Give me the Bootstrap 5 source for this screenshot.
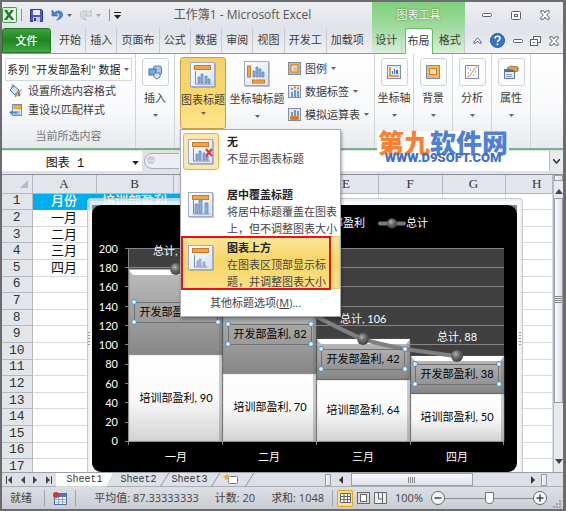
<!DOCTYPE html>
<html lang="zh-CN">
<head>
<meta charset="utf-8">
<meta name="viewport" content="width=device-width, initial-scale=1">
<title>工作簿1 - Microsoft Excel</title>
<link href="https://cdn.jsdelivr.net/npm/bootstrap@5.3.0/dist/css/bootstrap.min.css" rel="stylesheet">
<style>
  body { font: 11px/16px "Open Sans", "Noto Sans CJK SC", sans-serif; color: #3b3b3b; background: #dfe3e8; }
  button, input, select { font: inherit; color: inherit; }
  button { background: none; border: 0; padding: 0; }
  svg { display: block; flex: none; }
  a { color: inherit; text-decoration: none; }
  .xl-window { height: 100vh; min-height: 480px; border: 2px solid #6c6c6e; border-right-width: 3px; }
  .xl-head { background: linear-gradient(#eceef2, #dfe2e8 55%, #eff1f4); border-bottom: 1px solid #5fbf62; }
  .title-row { height: 26px; }
  .tab-row { height: 25px; }
  .title-text { font-size: 12px; color: #555; }
  .vline { width: 1px; height: 12px; background: #8d9096; }
  .ctx-zone { width: 93px; }
  .ctx-title { background: linear-gradient(#7fd07c, #a1dba0); color: #fff; text-shadow: 0 0 2px #3c8c3c, 0 0 1px #3c8c3c; }
  .ctx-tabs { background: linear-gradient(#a1dba0, #d9efd9); }
  .win-zone { width: 98px; }
  .file-tab { width: 49px; background: linear-gradient(#3f9f3c, #1f8424 50%, #43a83e); border: 1px solid #1f7a24; border-radius: 3px 3px 0 0; color: #fff; font-weight: 500; }
  .rb-tab { border-right: 1px solid #c6cad1; white-space: nowrap; line-height: 24px; text-align: center; }
  .rb-tab.is-open { background: #fff; border: 1px solid #5fbf62; border-bottom: 0; border-radius: 3px 3px 0 0; margin: 0 3px -1px; width: 28px; }
  .xl-ribbon { height: 96px; background: linear-gradient(#fff, #f8f9fb 60%, #e7eaee); border-bottom: 2px solid #84ab8e; }
  .rb-group { border-right: 1px solid #cdd8d1; padding: 4px 3px; }
  .cmd-group { padding: 3px 0 0 5px; }
  .sel-group { width: 134px; }
  .sel-box { width: 100%; height: 23px; border: 1px solid #d3d6da; background: #fff; padding: 0 1px; color: #222; appearance: none; border-radius: 0; }
  .sel-wrap { position: relative; }
  .sel-wrap svg { position: absolute; right: 3px; top: 10px; }
  .cmd { height: 19px; gap: 5px; white-space: nowrap; }
  .dim { color: #777; }
  .narrow { width: 39px; }
  .icon-box { width: 27px; height: 28px; border: 1px solid #cfd3d8; border-radius: 3px; background: #fbfcfd; }
  .title-btn { width: 46px; height: 72px; border: 1px solid #c8a24a; border-radius: 3px; background: linear-gradient(#f6d16a, #fbd76b 50%, #fde48f); white-space: nowrap; }
  .axis-btn { width: 54px; height: 72px; white-space: nowrap; }
  .mini-cmd { height: 23px; gap: 4px; white-space: nowrap; }
  .title-menu { top: 72px; left: 0; width: 161px; min-width: 0; padding: 0; border: 1px solid #a7abb0; border-radius: 0; font-size: 11px; line-height: 17px; color: #444; box-shadow: 1px 2px 3px #0005; z-index: 20; }
  .opt { height: 53px; width: 100%; text-align: left; gap: 8px; padding: 2px 1px; border: 1px solid transparent; white-space: nowrap; }
  .opt b { color: #222; display: block; }
  .opt-icon { flex: none; width: 36px; height: 37px; border: 1px solid transparent; border-radius: 3px; }
  .opt-icon.is-set { background: #fbe6b0; border-color: #e0b35c; }
  .opt.is-hot { background: linear-gradient(#fbe69c, #f8d566 45%, #fae187); border-color: #eccf6c; }
  .ring { position: absolute; left: 0; top: 106px; width: 150px; height: 54px; border: 2px solid #f00f0f; pointer-events: none; }
  .more { height: 27px; width: 100%; padding-left: 29px; text-align: left; }
  .logo { position: absolute; left: 375px; top: 129px; width: 132px; height: 33px; z-index: 15; background: #fff; white-space: nowrap; }
  .logo-cn { font: 900 26px/21px "Noto Sans CJK SC", sans-serif; color: #fa8133; }
  .logo-cn span { color: #4f7fd6; }
  .logo-en { font: 900 13px/12px Roboto, sans-serif; color: #4070c8; }
  .xl-formula { height: 21px; background: #dfe3e8; border-top: 1px solid #d5e4d8; }
  .name-box { display: block; width: 140px; height: 20px; border: 0; background: #fff; text-align: center; padding: 2px 14px 0 0; font: 12px/18px "Liberation Mono", "Noto Sans CJK SC", monospace; color: #111; }
  .xl-sheet { border-top: 1px solid #8f949c; margin-top: 3px; background: #fff; }
  .cells { height: calc(100% + 4px); width: 100%; table-layout: fixed; border-collapse: collapse; font: 13px/14px "Liberation Serif", "Noto Sans CJK SC", serif; color: #111; }
  .cells thead th { height: 18px; }
  .cells th, .cells td { padding: 0; border-right: 1px solid #d6d9dd; border-bottom: 1px solid #d6d9dd; text-align: center; overflow: hidden; white-space: nowrap; font-weight: 400; }
  .cells th { background: #e2e5ea; border-color: #b3b7be; color: #333; }
  .cells tbody th { font-family: "Liberation Mono", monospace; }
  .cells td.hd { background: #00aeef; border-color: #00aeef; color: #fff; font-weight: 500; }
  .chart { position: absolute; left: 85px; top: 23px; }
  .vbar { width: 14px; background: #e7eaef; border-left: 1px solid #b4b8c0; }
  .thumb { border: 1px solid #9aa0aa; background: linear-gradient(90deg, #f8f9fb, #dde1e8); }
  .vthumb { height: 69%; }
  .splitter { width: 6px; height: 12px; }
  .hthumb { border: 1px solid #9aa0aa; background: linear-gradient(#f8f9fb, #dde1e8); height: 13px; width: 122px; }
  .xl-tabs { height: 14px; background: #dde1e7; border-top: 1px solid #9ba0a8; }
  .sheet-tab { position: relative; width: 51px; font: 10px/14px "Liberation Mono", monospace; color: #333; text-align: center; }
  .sheet-tab::after { content: ""; position: absolute; right: -1px; top: 0; width: 1px; height: 14px; background: #8d929a; transform: skewX(-32deg); }
  .sheet-tab.is-open { background: #fff; clip-path: polygon(0 0, 100% 0, 88% 100%, 0 100%); width: 57px; }
  .xl-status { height: 23px; background: linear-gradient(#dcdfe4, #c9cdd3); border-top: 1px solid #a9adb4; color: #444; white-space: nowrap; }
  .sep2 { width: 1px; height: 16px; background: #9da2a9; }
  .view-on { background: #fbe08a; border: 1px solid #d9a52b; border-radius: 2px; width: 16px; height: 17px; }
  .zoom-range { width: 88px; height: 14px; appearance: none; background: linear-gradient(#8a8f96, #8a8f96) center / 100% 1px no-repeat; margin: 0; }
  .zoom-range::-webkit-slider-thumb { appearance: none; width: 9px; height: 12px; background: #fff; border: 1px solid #6d7279; border-radius: 1px 1px 5px 5px; }
</style>
<script src="https://cdn.jsdelivr.net/npm/bootstrap@5.3.0/dist/js/bootstrap.bundle.min.js"></script>
</head>
<body>
<svg width="0" height="0" class="position-absolute" aria-hidden="true">
  <defs>
    <linearGradient id="frameG" x1="0" y1="0" x2="1" y2="1"><stop offset="0" stop-color="#fff"/><stop offset="1" stop-color="#d5e1f2"/></linearGradient>
    <symbol id="chartBase" viewBox="0 0 26 26">
      <rect x="1.5" y="1.5" width="24" height="24" fill="#7087ae"/><rect x=".5" y=".5" width="24" height="24" fill="url(#frameG)" stroke="#9badca"/>
    </symbol>
    <symbol id="titleAbove" viewBox="0 0 26 26">
      <use href="#chartBase"/><rect x="4.500" y="3.500" width="16" height="4" fill="#f2a343" stroke="#c87b24"/>
      <path d="M5.500 9v13h16" fill="none" stroke="#7c8daa"/>
      <path d="M8 15h2v6H8zM11 12h2v9h-2zM15 14h2v7h-2zM18 17h2v4h-2z" fill="#8fb1e0" stroke="#5f7fb5" stroke-width=".7"/>
    </symbol>
    <symbol id="titleOver" viewBox="0 0 26 26">
      <use href="#chartBase"/><path d="M5.500 5v17h16" fill="none" stroke="#7c8daa"/>
      <path d="M7 12h3v9H7zM11 8h3v13h-3zM17 11h3v10h-3z" fill="#8fb1e0" stroke="#5f7fb5" stroke-width=".7"/>
      <rect x="4.500" y="3.500" width="16" height="4" fill="#f2a343" stroke="#c87b24"/>
    </symbol>
    <symbol id="titleLow" viewBox="0 0 26 26">
      <use href="#chartBase"/><rect x="4.500" y="3.500" width="16" height="4" fill="#f2a343" stroke="#c87b24"/>
      <path d="M6.500 10v12h13" fill="none" stroke="#7c8daa"/><path d="M9 16h1v5H9zM11 14h2v7h-2zM15 17h2v4h-2z" fill="#a9c1e6" stroke="#7d97c2" stroke-width=".7"/>
    </symbol>
    <symbol id="caret" viewBox="0 0 5 3"><path d="M0 0h5L2.500 3z" fill="#666"/></symbol>
    <symbol id="closeX" viewBox="0 0 10 10"><path d="M.8.800h2.700L5 3 6.500.8h2.700v1.500L6.700 5l2.500 2.700v1.500H6.500L5 7 3.500 9.200H.8V7.700L3.300 5 .8 2.300z" fill="#fff" stroke="#5c6068"/></symbol>
  </defs>
</svg>

<div class="xl-window d-flex flex-column position-relative overflow-hidden">
  <header class="xl-head">
    <div class="title-row d-flex">
      <div class="flex-fill d-flex align-items-center">
        <svg width="15" height="16" viewBox="0 0 15 16" role="img" aria-label="Excel"><rect x=".5" y=".5" width="14" height="15" rx="1" fill="#d9efd6" stroke="#4b9a4b"/><rect x="9" y="2" width="4" height="12" fill="#fff"/><path d="M2 3h3l2 3 2-3h3L8.500 8l4 5h-3L7 10l-2 3H2l3.500-5z" fill="#1d7d2c"/></svg>
        <span class="vline mx-1"></span>
        <button class="ms-1" aria-label="保存"><svg width="13" height="13" viewBox="0 0 13 13"><path d="M.5.500h11l1 1v11H.5z" fill="#5156b8" stroke="#34388d"/><rect x="3" y="1" width="7" height="5" fill="#e9ecfb"/><rect x="3" y="8" width="7" height="5" fill="#bfc6e8"/><path d="M4 9h2v3H4z" fill="#34388d"/></svg></button>
        <button class="ms-2 d-flex align-items-center gap-1" aria-label="撤消"><svg width="12" height="12" viewBox="0 0 12 12"><path d="M1 1v6h6L5 5c2-1.500 3.500-.5 3.500 1.500 0 2-1.500 3-3 4.500C9 10.500 11.500 8.500 11.500 5.500 11.500 2 7.500.500 3.500 3.500z" fill="#4a86d8" stroke="#2a5fae" stroke-width=".6"/></svg><svg width="5" height="3"><use href="#caret"/></svg></button>
        <button class="ms-2 d-flex align-items-center gap-1 opacity-50" aria-label="恢复"><svg width="12" height="12" viewBox="0 0 12 12"><path d="M11 1v6H5l2-2C5 3.500 3.500 4.500 3.500 6.500c0 2 1.500 3 3 4.500C3 10.500.5 8.500.5 5.500.5 2 4.500.500 8.500 3.500z" fill="#d6d9de" stroke="#777c85" stroke-width=".8"/></svg><svg width="5" height="3"><use href="#caret"/></svg></button>
        <span class="vline ms-2 me-1"></span>
        <button aria-label="自定义快速访问工具栏"><svg width="7" height="7" viewBox="0 0 7 7"><path d="M0 .5h7" stroke="#222"/><path d="M0 3h7L3.500 7z" fill="#222"/></svg></button>
        <h1 class="title-text flex-fill text-center m-0 pe-2 fw-normal">工作簿1 - Microsoft Excel</h1>
      </div>
      <div class="ctx-zone ctx-title d-flex align-items-center justify-content-center">图表工具</div>
      <div class="win-zone d-flex align-items-center justify-content-around px-1 ps-2">
        <button aria-label="最小化"><svg width="10" height="4"><rect x=".5" y=".5" width="9" height="3" rx="1" fill="#fff" stroke="#5c6068"/></svg></button>
        <button aria-label="最大化"><svg width="10" height="9"><rect x=".5" y=".5" width="9" height="8" rx="1" fill="#fff" stroke="#5c6068"/><rect x="3.500" y="3.500" width="3" height="2" fill="none" stroke="#5c6068"/></svg></button>
        <button aria-label="关闭"><svg width="10" height="10"><use href="#closeX"/></svg></button>
      </div>
    </div>
    <nav class="tab-row d-flex">
      <button class="file-tab">文件</button>
      <div class="flex-fill d-flex px-1">
        <a href="#" class="rb-tab flex-fill">开始</a><a href="#" class="rb-tab flex-fill">插入</a><a href="#" class="rb-tab flex-fill">页面布</a><a href="#" class="rb-tab flex-fill">公式</a><a href="#" class="rb-tab flex-fill">数据</a><a href="#" class="rb-tab flex-fill">审阅</a><a href="#" class="rb-tab flex-fill">视图</a><a href="#" class="rb-tab flex-fill">开发工</a><a href="#" class="rb-tab flex-fill border-0">加载项</a>
      </div>
      <div class="ctx-zone ctx-tabs d-flex">
        <a href="#" class="rb-tab flex-fill">设计</a><a href="#" class="rb-tab is-open">布局</a><a href="#" class="rb-tab flex-fill">格式</a>
      </div>
      <div class="win-zone d-flex align-items-center justify-content-between ps-2 pe-1">
        <button aria-label="折叠功能区"><svg width="9" height="7" viewBox="0 0 9 7"><path d="M.8 5L4.500.800 8.200 5v1.200H6.500L4.500 4 2.500 6.200H.8z" fill="#fff" stroke="#5c6068"/></svg></button>
        <button aria-label="帮助"><svg width="15" height="15" viewBox="0 0 15 15"><circle cx="7.500" cy="7.500" r="7" fill="#3473c6" stroke="#2558a0"/><path d="M5 5.500C5 2.500 10 2.500 10 5.500 10 7.500 7.500 7 7.500 9.200M7.500 10.500v1.700" fill="none" stroke="#fff" stroke-width="1.600"/></svg></button>
        <button aria-label="最小化窗口"><svg width="10" height="4"><rect x=".5" y=".5" width="9" height="3" rx="1" fill="#fff" stroke="#5c6068"/></svg></button>
        <button aria-label="还原窗口"><svg width="11" height="10"><rect x="3.500" y=".5" width="7" height="6" fill="#fff" stroke="#5c6068"/><rect x=".5" y="3.500" width="7" height="6" fill="#fff" stroke="#5c6068"/><rect x="3" y="6" width="2" height="1" fill="#5c6068"/></svg></button>
        <button aria-label="关闭窗口"><svg width="10" height="10"><use href="#closeX"/></svg></button>
      </div>
    </nav>
  </header>

  <section class="xl-ribbon d-flex">
    <div class="rb-group sel-group d-flex flex-column">
      <div class="sel-wrap"><select class="sel-box" aria-label="图表元素"><option>系列 "开发部盈利" 数据</option></select><svg width="5" height="3"><use href="#caret"/></svg></div>
      <button class="cmd d-flex align-items-center ps-1"><svg width="14" height="14" viewBox="0 0 14 14"><path d="M1 6l4-4 5 4-4 5z" fill="#cfe0f5" stroke="#4f76ac"/><path d="M3 4V1.500C3 .5 5 .5 5 2" fill="none" stroke="#4f76ac"/><path d="M9 7c2 1 3 3 2 5-1 1-2 0-2-2z" fill="#3c78c8"/><path d="M13 5L8 12l-2 1 .5-2z" fill="#eaa93c" stroke="#a8701c" stroke-width=".5"/></svg>设置所选内容格式</button>
      <button class="cmd d-flex align-items-center ps-1"><svg width="14" height="14" viewBox="0 0 14 14"><rect x="3.500" y="1.500" width="9" height="11" fill="#e6effa" stroke="#6f8db9"/><rect x="5" y="2" width="7" height="4" fill="#f3b13f" stroke="#b87c1d" stroke-width=".5"/><path d="M5 9h6M5 11h6" stroke="#6f8db9"/><path d="M0 9.500L4 6.500v2h4v2H4v2z" fill="#4d8be0"/></svg>重设以匹配样式</button>
      <div class="dim text-center mt-auto">当前所选内容</div>
    </div>
    <div class="rb-group narrow">
      <button class="d-flex flex-column align-items-center w-100"><span class="icon-box d-flex align-items-center justify-content-center"><svg width="15" height="15" viewBox="0 0 15 15"><rect x="5.500" y="1" width="8" height="9" rx="2" fill="#a9c8ee" stroke="#557fb8"/><rect x="1" y="4" width="7" height="6" fill="#7aa5dd" stroke="#476fa8"/><path d="M6 8h6v4l-3 2-3-2z" fill="#d5e5f8" stroke="#557fb8"/></svg></span><span class="mt-1">插入</span><svg class="mt-2" width="5" height="3"><use href="#caret"/></svg></button>
    </div>
    <div class="rb-group cmd-group d-flex flex-fill">
      <div class="position-relative">
        <button class="title-btn d-flex flex-column align-items-center pt-1" aria-expanded="true"><svg width="26" height="26"><use href="#titleAbove"/></svg><span class="mt-1">图表标题</span><svg class="mt-1" width="5" height="3"><use href="#caret"/></svg></button>
        <div class="dropdown-menu title-menu show">
          <button class="opt d-flex"><span class="opt-icon d-flex align-items-center justify-content-center is-set"><svg width="26" height="26" viewBox="0 0 26 26"><use href="#titleAbove"/><path d="M18 10l6 7M24 10l-6 7" stroke="#e03426" stroke-width="2"/></svg></span><span><b>无</b>不显示图表标题</span></button>
          <button class="opt d-flex"><span class="opt-icon d-flex align-items-center justify-content-center"><svg width="26" height="26"><use href="#titleOver"/></svg></span><span><b>居中覆盖标题</b>将居中标题覆盖在图表<br>上，但不调整图表大小</span></button>
          <button class="opt d-flex is-hot"><span class="opt-icon d-flex align-items-center justify-content-center"><svg width="26" height="26"><use href="#titleLow"/></svg></span><span><b>图表上方</b>在图表区顶部显示标<br>题，并调整图表大小</span></button>
          <button class="more">其他标题选项(<u>M</u>)...</button>
          <div class="ring"></div>
        </div>
      </div>
      <button class="axis-btn d-flex flex-column align-items-center pt-1 mx-1"><svg width="26" height="26" viewBox="0 0 26 26"><use href="#chartBase"/><rect x="3.500" y="5" width="3" height="11" fill="#f2a343" stroke="#c87b24"/><rect x="8.500" y="19" width="12" height="3" fill="#f2a343" stroke="#c87b24"/><path d="M9 10h2v6H9zM12 6h2v10h-2zM15 8h2v8h-2zM18 11h2v5h-2z" fill="#8fb1e0" stroke="#5f7fb5" stroke-width=".7"/></svg><span class="mt-1">坐标轴标题</span><svg class="mt-2" width="5" height="3"><use href="#caret"/></svg></button>
      <div>
        <button class="mini-cmd d-flex align-items-center"><svg width="13" height="13"><rect x=".5" y=".5" width="12" height="12" fill="#f0b45a" stroke="#7c8daa"/><rect x="3" y="3" width="7" height="7" fill="#dfe8f5" stroke="#b87c2d"/><path d="M5 8h4M5 6h4" stroke="#e0a040"/></svg>图例<svg width="5" height="3"><use href="#caret"/></svg></button>
        <button class="mini-cmd d-flex align-items-center"><svg width="13" height="13"><rect x=".5" y=".5" width="12" height="12" fill="#dfe9f7" stroke="#7c8daa"/><path d="M3 7h2v5H3zM6 5h2v7H6zM9 6h2v6H9z" fill="#6e97d2"/><path d="M3 4h2M6 2.500h2M9 3.500h2" stroke="#e2872a" stroke-width="2"/></svg>数据标签<svg width="5" height="3"><use href="#caret"/></svg></button>
        <button class="mini-cmd d-flex align-items-center"><svg width="13" height="13"><rect x=".5" y=".5" width="12" height="12" fill="#dfe9f7" stroke="#7c8daa"/><path d="M3 4h2v4H3zM6 2h2v6H6zM9 3h2v5H9z" fill="#6e97d2"/><path d="M2 8h9v4H2z" fill="#ec8b34"/><path d="M2 10h9M5 8v4M8 8v4" stroke="#b35f17" stroke-width=".6"/></svg>模拟运算表<svg width="5" height="3"><use href="#caret"/></svg></button>
      </div>
    </div>
    <div class="rb-group narrow">
      <button class="d-flex flex-column align-items-center w-100 text-nowrap"><span class="icon-box d-flex align-items-center justify-content-center"><svg width="14" height="14"><rect x=".5" y=".5" width="13" height="13" fill="#e3ecf8" stroke="#7c8daa"/><path d="M3 2v9h9" fill="none" stroke="#ec7d2b" stroke-width="1.500"/><path d="M5 6h1v3H5zM7 4h1v5H7zM9 5h2v4H9z" fill="#4677be"/></svg></span><span class="mt-1">坐标轴</span><svg class="mt-2" width="5" height="3"><use href="#caret"/></svg></button>
    </div>
    <div class="rb-group narrow">
      <button class="d-flex flex-column align-items-center w-100"><span class="icon-box d-flex align-items-center justify-content-center"><svg width="14" height="14"><rect x=".5" y=".5" width="13" height="13" fill="#f4b765" stroke="#7c8daa"/><rect x="3.500" y="3.500" width="7" height="6" fill="#f9d9a6" stroke="#c38232"/></svg></span><span class="mt-1">背景</span><svg class="mt-2" width="5" height="3"><use href="#caret"/></svg></button>
    </div>
    <div class="rb-group narrow">
      <button class="d-flex flex-column align-items-center w-100"><span class="icon-box d-flex align-items-center justify-content-center"><svg width="14" height="14"><rect x=".5" y=".5" width="13" height="13" fill="#f6f8fc" stroke="#8392ab"/><path d="M2 12C7 11 8 3 12 2" fill="none" stroke="#e9892f"/><path d="M3 8h1M5 5h1M8 10h1M10 7h1M3 3h1" stroke="#4677be"/></svg></span><span class="mt-1">分析</span><svg class="mt-2" width="5" height="3"><use href="#caret"/></svg></button>
    </div>
    <div class="rb-group narrow">
      <button class="d-flex flex-column align-items-center w-100"><span class="icon-box d-flex align-items-center justify-content-center"><svg width="15" height="14"><rect x=".5" y="4.500" width="10" height="9" fill="#e3ecf8" stroke="#5e7cab"/><path d="M1 5h9v2H1z" fill="#3f6fb8"/><path d="M2 9.500h6M2 11.500h6" stroke="#8aa2c8"/><path d="M3 3l4-2 7 1v4l-3 1-2-2H6z" fill="#dba544" stroke="#7a5a1d" stroke-width=".7"/></svg></span><span class="mt-1">属性</span><svg class="mt-2" width="5" height="3"><use href="#caret"/></svg></button>
    </div>
    <div class="px-3"></div>
  </section>

  <div class="logo text-center"><div class="logo-cn">第九<span>软件网</span></div><div class="logo-en">WWW.D9SOFT.COM</div></div>

  <div class="xl-formula d-flex align-items-center">
    <div class="sel-wrap"><input class="name-box" aria-label="名称框" value="图表 1"><svg width="7" height="4" viewBox="0 0 5 3"><path d="M0 0h5L2.500 3z" fill="#222"/></svg></div>
    <svg width="37" height="18" viewBox="0 0 37 18"><path d="M37 1.500H10a7.500 7.500 0 0 0 0 15h27" fill="#eceef1" stroke="#a9adb4"/><circle cx="9" cy="8" r="4" fill="#c9ccd2"/><path d="M6 9h6" stroke="#eee"/></svg>
    <input class="flex-fill border-0 bg-white h-100" aria-label="编辑栏">
    <button class="vbar h-100 d-flex align-items-center justify-content-center" aria-label="展开编辑栏"><svg width="7" height="5"><path d="M0 0l3.500 4L7 0" fill="none" stroke="#333" stroke-width="1.500"/></svg></button>
  </div>

  <main class="xl-sheet d-flex flex-fill position-relative overflow-hidden">
    <div class="flex-fill position-relative overflow-hidden">
      <table class="cells">
        <colgroup><col width="30"><col width="64"><col width="77"><col width="71"><col width="70"><col width="64"><col width="64"><col width="63"><col></colgroup>
        <thead><tr><th class="text-end"><svg class="ms-auto me-1" width="8" height="8"><path d="M8 0v8H0z" fill="#b6bac2"/></svg></th><th>A</th><th>B</th><th>C</th><th>D</th><th>E</th><th>F</th><th>G</th><th class="ps-3">H</th></tr></thead>
        <tbody>
          <tr><th>1</th><td class="hd">月份</td><td class="hd">培训部盈利</td><td class="hd"></td><td class="hd"></td><td></td><td></td><td></td><td></td></tr>
          <tr><th>2</th><td>一月</td><td></td><td></td><td></td><td></td><td></td><td></td><td></td></tr>
          <tr><th>3</th><td>二月</td><td></td><td></td><td></td><td></td><td></td><td></td><td></td></tr>
          <tr><th>4</th><td>三月</td><td></td><td></td><td></td><td></td><td></td><td></td><td></td></tr>
          <tr><th>5</th><td>四月</td><td></td><td></td><td></td><td></td><td></td><td></td><td></td></tr>
          <tr><th>6</th><td></td><td></td><td></td><td></td><td></td><td></td><td></td><td></td></tr>
          <tr><th>7</th><td></td><td></td><td></td><td></td><td></td><td></td><td></td><td></td></tr>
          <tr><th>8</th><td></td><td></td><td></td><td></td><td></td><td></td><td></td><td></td></tr>
          <tr><th>9</th><td></td><td></td><td></td><td></td><td></td><td></td><td></td><td></td></tr>
          <tr><th>10</th><td></td><td></td><td></td><td></td><td></td><td></td><td></td><td></td></tr>
          <tr><th>11</th><td></td><td></td><td></td><td></td><td></td><td></td><td></td><td></td></tr>
          <tr><th>12</th><td></td><td></td><td></td><td></td><td></td><td></td><td></td><td></td></tr>
          <tr><th>13</th><td></td><td></td><td></td><td></td><td></td><td></td><td></td><td></td></tr>
          <tr><th>14</th><td></td><td></td><td></td><td></td><td></td><td></td><td></td><td></td></tr>
          <tr><th>15</th><td></td><td></td><td></td><td></td><td></td><td></td><td></td><td></td></tr>
          <tr><th>16</th><td></td><td></td><td></td><td></td><td></td><td></td><td></td><td></td></tr>
          <tr><th>17</th><td></td><td></td><td></td><td></td><td></td><td></td><td></td><td></td></tr>
        </tbody>
      </table>

      <svg class="chart" width="436" height="275" viewBox="87 198 436 275" font-family="Lato, 'Noto Sans CJK SC', sans-serif" font-size="11" role="img" aria-label="盈利图表">
        <defs>
          <linearGradient id="low" x1="0" y1="0" x2="0" y2="1"><stop offset="0" stop-color="#fff"/><stop offset=".5" stop-color="#fafafa"/><stop offset="1" stop-color="#d2d2d2"/></linearGradient>
          <linearGradient id="up" x1="0" y1="0" x2="0" y2="1"><stop offset="0" stop-color="#bdbdbd"/><stop offset="1" stop-color="#868686"/></linearGradient>
          <radialGradient id="ball" cx=".4" cy=".35" r=".6"><stop offset="0" stop-color="#b5b5b5"/><stop offset=".5" stop-color="#6c6c6c"/><stop offset="1" stop-color="#474747"/></radialGradient>
        </defs>
        <rect x="87.500" y="198.500" width="435" height="280" rx="3" fill="#e8ebed" fill-opacity=".75" stroke="#c3c8cc"/>
        <rect x="90" y="201" width="430" height="276" fill="#fff" fill-opacity=".5"/>
        <path d="M92 205h7l-7 7zM517 205h-7l7 7z" fill="#888"/>
        <rect x="92" y="205" width="425" height="267" rx="9" fill="#000"/>
        <rect x="129" y="248" width="375" height="193" fill="#404040"/>
        <path d="M125 248.500h379M125 267.500h379M125 286.500h379M125 306.500h379M125 325.500h379M125 344.500h379M125 364.500h379M125 383.500h379M125 402.500h379M125 422.500h379M125 441.500h379M128.500 248v197M222.500 441v4M316.500 441v4M410.500 441v4M503.500 441v4" stroke="#868686" fill="none"/>
        <g fill="url(#up)" stroke="#777" stroke-width=".5"><rect x="129" y="269" width="93" height="86"/><rect x="223" y="294" width="93" height="80"/><rect x="317" y="339" width="93" height="40"/><rect x="411" y="356" width="93" height="37"/></g>
        <g fill="#fff"><path d="M129 270h93l-4 5h-85zM317 339h93l-4 5h-85zM411 356h93l-4 5h-85z"/></g>
        <g fill="url(#low)" stroke="#bbb" stroke-width=".5"><rect x="129" y="355" width="93" height="86"/><rect x="223" y="374" width="93" height="67"/><rect x="317" y="380" width="93" height="61"/><rect x="411" y="394" width="93" height="47"/></g>
        <g fill="none" stroke="#6d6d6d" stroke-opacity=".35" stroke-width="3"><path d="M220.500 275v166M314.500 318v123M408.500 344v97M502.500 361v80"/></g>
        <path d="M176 269C207 273 238 283 269 294C300 305 332 327 363 339C394 349 426 352 457 356" fill="none" stroke="#808080" stroke-width="4"/>
        <g fill="url(#ball)"><circle cx="176" cy="269" r="6"/><circle cx="269" cy="294" r="6"/><circle cx="363" cy="339" r="6"/><circle cx="457" cy="356" r="6"/></g>
        <path d="M380 223.500h24" stroke="#777" stroke-width="4" stroke-linecap="round"/><circle cx="392" cy="223.500" r="5" fill="url(#ball)"/>
        <g fill="#fff">
          <text x="365" y="227" text-anchor="end">开发部盈利</text><text x="406" y="227">总计</text>
          <text x="153" y="255">总计, 178</text><text x="340" y="323">总计, 106</text><text x="437" y="341">总计, 88</text>
          <g text-anchor="end"><text x="118" y="253">200</text><text x="118" y="272">180</text><text x="118" y="291">160</text><text x="118" y="311">140</text><text x="118" y="330">120</text><text x="118" y="349">100</text><text x="118" y="368">80</text><text x="118" y="388">60</text><text x="118" y="407">40</text><text x="118" y="426">20</text><text x="118" y="445">0</text></g>
          <g text-anchor="middle"><text x="176" y="461">一月</text><text x="269" y="461">二月</text><text x="363" y="461">三月</text><text x="457" y="461">四月</text></g>
        </g>
        <g fill="none" stroke="#707070"><rect x="134.500" y="302.500" width="83" height="20"/><rect x="228.500" y="324.500" width="83" height="20"/><rect x="321.500" y="349.500" width="83" height="20"/><rect x="415.500" y="364.500" width="83" height="20"/></g>
        <g fill="#000" text-anchor="middle">
          <text x="176" y="316">开发部盈利, 88</text><text x="270" y="338">开发部盈利, 82</text><text x="363" y="363">开发部盈利, 42</text><text x="457" y="378">开发部盈利, 38</text>
          <text x="176" y="402">培训部盈利, 90</text><text x="270" y="411">培训部盈利, 70</text><text x="363" y="414">培训部盈利, 64</text><text x="457" y="421">培训部盈利, 50</text>
        </g>
        <g fill="#d9eefa" stroke="#4f8db5"><circle cx="134" cy="302" r="2.500"/><circle cx="134" cy="322" r="2.500"/><circle cx="218" cy="322" r="2.500"/><circle cx="228" cy="324" r="2.500"/><circle cx="311" cy="324" r="2.500"/><circle cx="228" cy="344" r="2.500"/><circle cx="311" cy="344" r="2.500"/><circle cx="321" cy="349" r="2.500"/><circle cx="405" cy="349" r="2.500"/><circle cx="321" cy="369" r="2.500"/><circle cx="405" cy="369" r="2.500"/><circle cx="415" cy="364" r="2.500"/><circle cx="499" cy="364" r="2.500"/><circle cx="415" cy="384" r="2.500"/><circle cx="499" cy="384" r="2.500"/></g>
        <path d="M89 332v14M520 332v14" stroke="#999" stroke-width="2" stroke-dasharray="1 2"/>
      </svg>
    </div>
    <div class="vbar d-flex flex-column align-items-stretch">
      <div class="thumb mb-2" aria-hidden="true"><div class="pt-1"></div></div>
      <svg class="mx-auto mb-1" width="8" height="5"><path d="M4 0l4 5H0z" fill="#444"/></svg>
      <div class="thumb vthumb d-flex align-items-center justify-content-center"><svg width="7" height="8"><path d="M0 .5h7M0 2.500h7M0 4.500h7M0 6.500h7" stroke="#888"/></svg></div>
      <svg class="mx-auto mt-auto mb-2" width="8" height="5"><path d="M4 5l4-5H0z" fill="#444"/></svg>
    </div>
  </main>

  <div class="xl-tabs d-flex align-items-center">
    <svg class="ms-1 me-1" width="46" height="8" viewBox="0 0 46 8" role="img" aria-label="工作表导航"><path d="M.500 0v8M45.500 0v8" stroke="#444"/><path d="M6 0v8L2 4zM19 0v8l-4-4zM27 0v8l4-4zM40 0v8l4-4z" fill="#444"/></svg>
    <button class="sheet-tab is-open">Sheet1</button><button class="sheet-tab">Sheet2</button><button class="sheet-tab">Sheet3</button>
    <button class="sheet-tab d-flex justify-content-center w-auto px-2" aria-label="插入工作表"><svg width="18" height="13" viewBox="0 0 18 13"><rect x="5.500" y="3.500" width="9" height="7" rx="1" fill="#fff" stroke="#667aa5"/><path d="M4 0l1 2.500L8 3 5.500 5 6 8 4 6 1.500 7.500 2 5 0 3l3-.5z" fill="#f1a93a"/></svg></button>
    <div class="ms-auto d-flex align-items-center">
      <span class="thumb splitter me-2"></span>
      <svg class="me-2" width="4" height="8"><path d="M4 0v8L0 4z" fill="#333"/></svg>
      <div class="hthumb d-flex align-items-center justify-content-center"><svg width="8" height="6"><path d="M.5 0v6M2.500 0v6M4.500 0v6M6.500 0v6" stroke="#888"/></svg></div>
      <svg class="ms-5 me-1" width="16" height="8"><path d="M10 0v8l4-4z" fill="#333"/></svg>
      <span class="thumb splitter me-3"></span>
    </div>
  </div>

  <footer class="xl-status d-flex align-items-center">
    <span class="px-2 me-1">就绪</span><span class="sep2"></span>
    <svg class="mx-2" width="14" height="13"><rect x="1.500" y="1.500" width="12" height="11" fill="#fff" stroke="#4f6faa"/><path d="M2 2h11v3H2z" fill="#4f79c2"/><path d="M2 7.500h11M2 10h11M5.500 5v7M9.500 5v7" stroke="#8ca5d0"/><circle cx="3" cy="3" r="3" fill="#d8352a"/></svg>
    <span class="sep2"></span>
    <span class="flex-fill d-flex justify-content-end gap-3 pe-2"><span>平均值: 87.33333333</span><span>计数: 20</span><span>求和: 1048</span></span>
    <span class="sep2 me-1"></span>
    <button class="view-on d-flex align-items-center justify-content-center" aria-label="普通"><svg width="11" height="10"><path d="M.5.500h10v9H.5zM.5 3.500h10M.5 6.500h10M4 .5v9M7.500.500v9" fill="#fff" stroke="#666"/></svg></button>
    <button class="ms-1" aria-label="页面布局"><svg width="13" height="12"><rect x=".5" y=".5" width="12" height="11" fill="#ddd" stroke="#666"/><rect x="3.500" y="2.500" width="6" height="7" fill="#fff" stroke="#666"/></svg></button>
    <button class="ms-1" aria-label="分页预览"><svg width="13" height="12"><path d="M.5.500h12v11H.5z" fill="#eee" stroke="#666"/><path d="M4.500 0v7h4V0M8.500 7v4" fill="none" stroke="#666"/></svg></button>
    <span class="ms-2 me-2">100%</span>
    <button aria-label="缩小"><svg width="14" height="14"><circle cx="7" cy="7" r="6.500" fill="#f5f6f8" stroke="#666"/><path d="M3.500 7h7" stroke="#444" stroke-width="1.500"/></svg></button>
    <input type="range" class="zoom-range" aria-label="显示比例" value="50">
    <button aria-label="放大"><svg width="14" height="14"><circle cx="7" cy="7" r="6.500" fill="#f5f6f8" stroke="#666"/><path d="M3.500 7h7M7 3.500v7" stroke="#444" stroke-width="1.500"/></svg></button>
    <svg class="ms-1 align-self-end" width="12" height="12"><path d="M8 3h2v2H8zM8 6h2v2H8zM5 6h2v2H5zM8 9h2v2H8zM5 9h2v2H5zM2 9h2v2H2z" fill="#9a9fa6"/></svg>
  </footer>
</div>
</body>
</html>
